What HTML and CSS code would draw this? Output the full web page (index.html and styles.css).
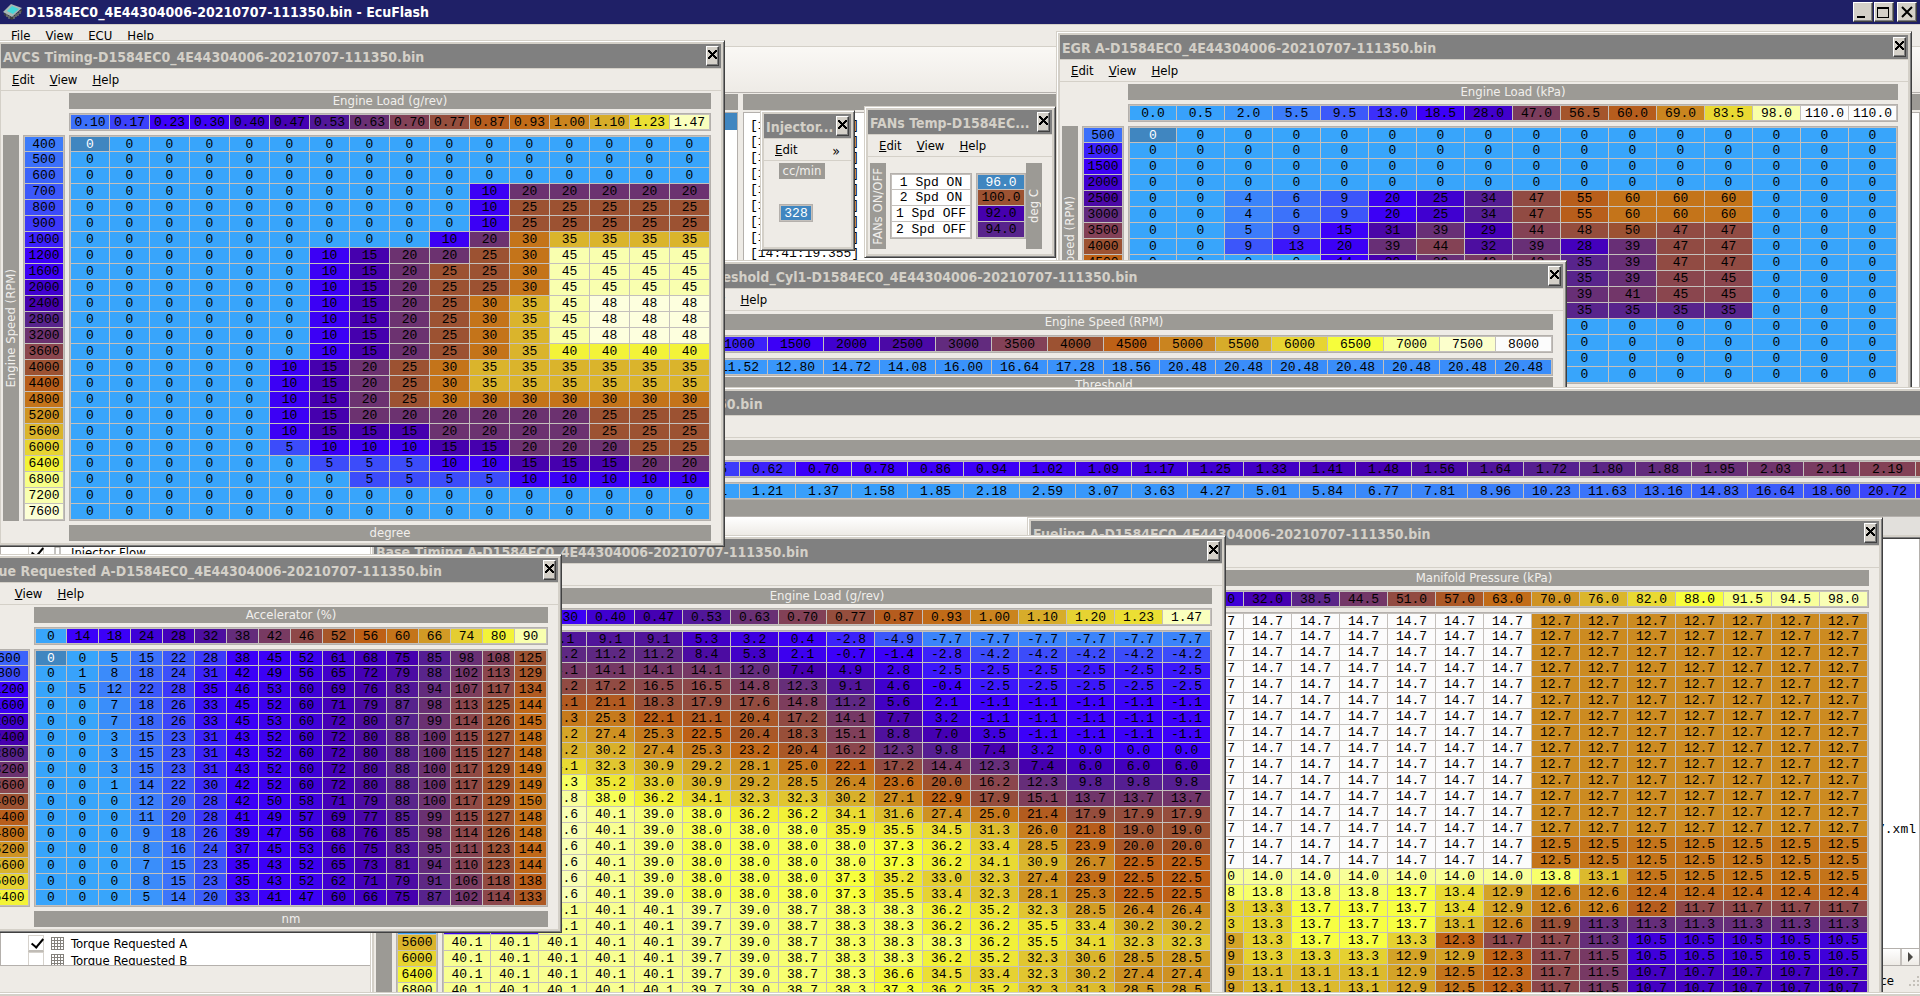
FILE: index.html
```html
<!DOCTYPE html>
<html lang="en">
<head>
<meta charset="utf-8">
<title>D1584EC0_4E44304006-20210707-111350.bin - EcuFlash</title>
<link rel="stylesheet" href="styles.css">
</head>
<body>
<div class="app">
  <header class="app-title">
    <svg class="app-icon" viewBox="0 0 20 16" width="20" height="16" aria-hidden="true">
      <path d="M1 9v2l8 5v-3zM9 13v3l10-8V5z" fill="#3c3f3d"/>
      <path d="M0 8L8 0l11 4-10 9z" fill="#a9b8b4"/>
      <path d="M4 7l5-5 7 3-6 5z" fill="#45d6d8"/>
      <path d="M11 12v3M13 10v3M15 9v3M17 7v3M4 10v3M6 12v3" stroke="#8a8f8a" stroke-width="1"/>
    </svg>
    <h1>D1584EC0_4E44304006-20210707-111350.bin - EcuFlash</h1>
    <div class="app-buttons">
      <button class="frame-button" aria-label="Minimize"><svg width="16" height="16" viewBox="0 0 16 16"><path d="M2 12h8v2H2z"/></svg></button>
      <button class="frame-button" aria-label="Maximize"><svg width="16" height="16" viewBox="0 0 16 16"><path d="M1 3h12v11H1zM2 5v8h10V5z" fill-rule="evenodd"/></svg></button>
      <button class="frame-button is-close" aria-label="Close"><svg width="16" height="16" viewBox="0 0 16 16"><path d="M3 3l10 10M13 3L3 13" stroke="#000" stroke-width="2"/></svg></button>
    </div>
  </header>
  <nav class="app-menu">
    <a href="#">File</a><a href="#">View</a><a href="#">ECU</a><a href="#">Help</a>
  </nav>
  <div class="toolbar"></div>

  <main class="docks">
    <section class="dock dock-tree">
      <div class="dock-bar"></div>
      <ul class="tree">
        <li class="tree-root"></li>
        <li class="tree-row row-injector"><label><input type="checkbox" checked><svg class="leaf" width="13" height="13" viewBox="0 0 13 13"><path d="M4 1h5v11H4z" fill="#fff" stroke="#8a8782"/></svg>Injector Flow</label></li>
        <li class="tree-row row-torque"><label><input type="checkbox" checked><svg class="leaf" width="13" height="13" viewBox="0 0 13 13"><path d="M.5 0v13M3.500 0v13M6.500 0v13M9.500 0v13M12.500 0v13M0 .5h13M0 3.500h13M0 6.500h13M0 9.500h13M0 12.500h13" stroke="#84817c"/></svg>Torque Requested A</label></li>
        <li class="tree-row"><label><input type="checkbox"><svg class="leaf" width="13" height="13" viewBox="0 0 13 13"><path d="M.5 0v13M3.500 0v13M6.500 0v13M9.500 0v13M12.500 0v13M0 .5h13M0 3.500h13M0 6.500h13M0 9.500h13M0 12.500h13" stroke="#84817c"/></svg>Torque Requested B</label></li>
      </ul>
    </section>
    <section class="dock dock-log">
      <div class="dock-bar"></div>
      <ol class="log">
        <li>[14:41:19.355] EcuFlash Version 1.44 a</li>
        <li>[14:41:19.355] OpenPort Library 1.4 99</li>
        <li>[14:41:19.355]</li>
        <li>[14:41:19.355]</li>
        <li>[14:41:19.355]</li>
        <li>[14:41:19.355]</li>
        <li>[14:41:19.355]</li>
        <li>[14:41:19.355]</li>
        <li>[14:41:19.355]</li>
        <li class="log-path">7.xml</li>
      </ol>
      <div class="scrollbar"><button class="scroll-right" aria-label="Scroll right"><svg width="6" height="10" viewBox="0 0 6 10"><path d="M0 0l5 5-5 5z" fill="#4b4946"/></svg></button></div>
    </section>
  </main>
  <footer class="status">
    <span>No Vehicle Interface</span>
    <svg class="grip" width="12" height="12" viewBox="0 0 12 12"><path d="M9 1h2v2H9zM5 5h2v2H5zM9 5h2v2H9zM1 9h2v2H1zM5 9h2v2H5zM9 9h2v2H9z" fill="#c5c1ba"/></svg>
  </footer>
  <div class="app-frame"></div>

  <div class="windows" id="windows">
    <section class="win win-injector">
      <div class="win-title"><h2>Injector...</h2><button class="close" aria-label="Close"></button></div>
      <nav class="win-menu"><a href="#"><u>E</u>dit</a><button class="more" aria-label="More">»</button></nav>
      <div class="injector-body">
        <div class="axis-label">cc/min</div>
        <table class="grid"><tbody><tr><td class="selected">328</td></tr></tbody></table>
      </div>
    </section>
    <section class="win win-fans">
      <div class="win-title"><h2>FANs Temp-D1584EC...</h2><button class="close" aria-label="Close"></button></div>
      <nav class="win-menu"><a href="#"><u>E</u>dit</a><a href="#"><u>V</u>iew</a><a href="#"><u>H</u>elp</a></nav>
      <div class="fans-body">
        <div class="axis-label is-vertical"><span>FANs ON/OFF</span></div>
        <table class="grid fans-names"><tbody><tr><th>1 Spd ON</th></tr><tr><th>2 Spd ON</th></tr><tr><th>1 Spd OFF</th></tr><tr><th>2 Spd OFF</th></tr></tbody></table>
        <table class="grid fans-values" id="fan-values"><tbody></tbody></table>
        <div class="axis-label is-vertical"><span>deg C</span></div>
      </div>
    </section>
  </div>
</div>
<script src="tables.js"></script>
</body>
</html>
```
FILE: styles.css
```css
:root {
  --face: #d4d0c8;
  --panel: #eeebe6;
  --bar: #9c9a95;
  --line: #c4c0bc;
  --edge: #b4b0ac;
  --ui: "DejaVu Sans Condensed", "DejaVu Sans", sans-serif;
  --mono: "Liberation Mono", "Courier New", monospace;
}

* { box-sizing: border-box; }

body {
  margin: 0;
  background: var(--panel);
  color: #000;
  font: 13px/16px var(--ui);
}

a { color: inherit; text-decoration: none; }
h1, h2 { margin: 0; font-size: 14px; font-weight: bold; white-space: nowrap; }
ul, ol { margin: 0; padding: 0; list-style: none; }

.app {
  position: relative;
  display: flex;
  flex-direction: column;
  height: 100vh;
  overflow: hidden;
}

/* application frame */
.app-title {
  display: flex;
  align-items: center;
  height: 24px;
  padding: 0 3px;
  background: #1f2067;
  color: #fff;
}
.app-icon { margin-right: 3px; }
.app-buttons { display: flex; margin-left: auto; gap: 1px; }
.frame-button, .close {
  display: grid;
  place-items: center;
  padding: 0;
  border: 1px solid;
  border-color: #fff #404040 #404040 #fff;
  background: var(--face);
  box-shadow: inset -1px -1px #808080;
}
.frame-button { width: 20px; height: 20px; }
.is-close { margin-left: 2px; }

.app-menu {
  display: flex;
  gap: 15px;
  height: 23px;
  padding: 3px 11px 0;
  border-top: 1px solid var(--face);
  border-bottom: 1px solid var(--face);
}
.toolbar {
  height: 46px;
  border-bottom: 1px solid var(--edge);
  background: linear-gradient(#faf8f5, var(--panel));
}

.docks {
  display: flex;
  flex: 1;
  gap: 5px;
  min-height: 0;
  padding-top: 1px;
}
.dock { display: flex; flex-direction: column; min-height: 0; }
.dock-tree { width: 738px; }
.dock-log { flex: 1; }
.dock-bar { height: 16px; margin-bottom: 2px; background: var(--bar); }

.tree {
  flex: 1;
  overflow: hidden;
  border: 1px solid var(--edge);
  background: #fff;
}
.tree-root { height: 17px; background: #4086c0; }
.tree-row { height: 17px; padding-left: 27px; }
.tree-row label { display: flex; align-items: center; height: 17px; }
.tree-row input {
  appearance: none;
  width: 16px;
  height: 17px;
  margin: 0 7px 0 0;
  border: 1px solid #d6d2cc;
  border-bottom: 2px solid #c0bcb6;
  background: #fff;
}
.tree-row input:checked::before {
  content: "";
  display: block;
  width: 5px;
  height: 10px;
  margin: 0 0 0 5px;
  border: solid #000;
  border-width: 0 2px 2px 0;
  transform: rotate(40deg);
}
.leaf { margin-right: 7px; }
.row-injector { margin-top: calc(24 * 17px + 6px); }
.row-torque { margin-top: calc(22 * 17px); }

.log {
  flex: 1;
  overflow: hidden;
  padding: 5px 3px 0 6px;
  border: 1px solid var(--edge);
  border-bottom: 0;
  background: #fff;
  font: 13px/16px var(--mono);
}
.log-path { margin-top: calc(35 * 16px); text-align: right; }
.scrollbar {
  display: flex;
  justify-content: flex-end;
  height: 18px;
  border: 1px solid var(--edge);
  background: linear-gradient(#fff, var(--panel));
}
.scroll-right {
  width: 19px;
  padding: 0;
  border: 0;
  border-left: 2px solid var(--line);
  background: none;
}

.status {
  display: flex;
  align-items: center;
  justify-content: flex-end;
  gap: 14px;
  height: 26px;
  padding-top: 4px;
}
.app-frame {
  position: relative;
  z-index: 2;
  height: 4px;
  border-top: 1px solid var(--face);
  background: var(--face);
  box-shadow: inset 0 1px #fff;
}

/* floating windows */
.windows { position: absolute; inset: 0; overflow: hidden; }
.win {
  position: absolute;
  width: max-content;
  padding: 3px;
  border: 1px solid;
  border-color: var(--face) #404040 #404040 var(--face);
  background: var(--face);
  box-shadow: inset 1px 1px #fff, inset -1px -1px #808080;
}
.win-title {
  display: flex;
  align-items: center;
  justify-content: space-between;
  height: 24px;
  padding: 0 2px;
  background: #808080;
  color: var(--face);
}
.win-title h2 { padding-top: 2px; }
.close { flex: none; width: 13px; height: 20px; }
.close::before {
  content: "";
  width: 9px;
  height: 9px;
  margin-bottom: 3px;
  background:
    linear-gradient(45deg, transparent 42%, #000 42% 58%, transparent 58%),
    linear-gradient(-45deg, transparent 42%, #000 42% 58%, transparent 58%);
}
.win-menu {
  display: flex;
  gap: 15px;
  height: 23px;
  padding: 3px 11px 0;
  border-top: 1px solid var(--face);
  border-bottom: 1px solid var(--face);
  background: var(--panel);
}
.more { margin-left: auto; padding: 0; border: 0; background: none; font: 14px/16px var(--ui); }

.map {
  display: grid;
  grid-template-columns: 16px 42px var(--values);
  gap: 4px;
  padding: 2px 10px 2px 2px;
  background: var(--panel);
}
.map .x-label, .map .x-axis, .map .unit { grid-column: 3; }
.axis-label {
  height: 16px;
  background: var(--bar);
  color: #f1efec;
  font-size: 13px;
  line-height: 16px;
  text-align: center;
  white-space: nowrap;
}
.is-vertical {
  display: flex;
  align-items: center;
  justify-content: center;
  width: 16px;
  height: auto;
}
.is-vertical span { writing-mode: vertical-rl; transform: rotate(180deg); }

.grid {
  width: 100%;
  border: 1px solid var(--edge);
  border-spacing: 0;
  table-layout: fixed;
  background: var(--line);
  font: 13px/13px var(--mono);
}
.grid td, .grid th {
  height: 16px;
  padding: 0;
  border: 0 solid var(--line);
  border-width: 0 1px 1px 0;
  font-weight: normal;
  text-align: center;
  white-space: nowrap;
}
.grid tr:first-child > * { border-top-width: 1px; }
.grid tr > :first-child { border-left-width: 1px; }
.grid .selected { background: #4086c0; color: #fff; }

/* one-row maps have no row axis */
.map.is-single { grid-template-columns: var(--values); padding-left: 6px; }
.is-single .x-label, .is-single .x-axis, .is-single .unit { grid-column: 1; }
.is-single .unit { margin-top: -4px; }

/* width of the value grid for each cell size */
.cells-32 { --values: 514px; }
.cells-40 { --values: 642px; }
.cells-48 { --values: 770px; }
.cells-56 { --values: 898px; }
.win-maf { --values: 1682px; }

.win-egr { left: 1056px; top: 31px; }
.win-injector { left: 760px; top: 110px; width: 95px; }
.win-fans { left: 864px; top: 106px; }
.win-threshold { left: 645px; top: 260px; }
.win-threshold .map { row-gap: 5px; padding-top: 3px; }
.win-maf { left: 285px; top: 387px; }
.win-maf .map { padding-bottom: 0; padding-left: 2px; }
.win-fueling { left: 1027px; top: 517px; }
.win-base { left: 370px; top: 535px; }
.win-avcs { left: -3px; top: 40px; }
.win-torque { left: -38px; top: 554px; }

.window-scroll { height: 19px; border-top: 1px solid var(--edge); background: #e2e0dc; }
.window-thumb {
  width: 1000px;
  height: 18px;
  background: linear-gradient(#fff, var(--panel));
}

.injector-body {
  display: flex;
  flex-direction: column;
  align-items: flex-start;
  gap: 25px;
  padding: 2px 15px 25px;
  background: var(--panel);
}
.injector-body .axis-label { width: 46px; }
.injector-body .grid { width: 34px; }

.fans-body {
  display: grid;
  grid-template-columns: 16px 82px 50px 16px;
  align-items: center;
  column-gap: 4px;
  padding: 6px 6px 5px 2px;
  background: var(--panel);
}
.fans-body .is-vertical { height: 86px; }
.fans-body .is-vertical:last-child { margin-left: -4px; }
.fans-names th { background: #fff; }
```
FILE: tables.js
```js
// Colour ramp shared by every map: [fraction, r, g, b]
const RAMP = [
  [0, 56, 165, 251], [0.05, 60, 124, 250], [0.1, 60, 76, 250], [0.12, 60, 44, 250],
  [0.14, 60, 0, 250], [0.2, 60, 0, 245], [0.25, 64, 0, 208], [0.3, 70, 0, 174],
  [0.35, 88, 36, 140], [0.4, 108, 50, 112], [0.45, 138, 70, 78], [0.5, 156, 82, 50],
  [0.56, 190, 96, 22], [0.6, 196, 116, 26], [0.7, 218, 180, 44], [0.8, 243, 243, 56],
  [0.815, 247, 255, 60], [0.85, 247, 255, 135], [0.9, 249, 255, 175], [0.96, 253, 255, 222], [1, 252, 252, 252]
];

function colour(value, [min, max]) {
  const f = Math.min(1, Math.max(0, (value - min) / (max - min)));
  const i = Math.max(1, RAMP.findIndex(stop => stop[0] >= f));
  const a = RAMP[i - 1], b = RAMP[i];
  const t = (f - a[0]) / (b[0] - a[0]);
  return "rgb(" + [1, 2, 3].map(k => Math.round(a[k] + (b[k] - a[k]) * t)).join(",") + ")";
}

// "12.7*3" stands for three equal cells, "_" for an empty one
function expand(line) {
  return line.trim().split(/\s+/).flatMap(token => {
    const [value, count] = token.split("*");
    return Array(Number(count || 1)).fill(value === "_" ? "" : value);
  });
}

function grid(rows, range, cls, tag, select) {
  const body = rows.map((row, y) => "<tr>" + row.map((v, x) =>
    select && x === 0 && y === 0
      ? `<${tag} class="selected">${v}</${tag}>`
      : `<${tag} style="background:${colour(Number(v), range)}">${v}</${tag}>`
  ).join("") + "</tr>").join("");
  return `<table class="grid ${cls}"><tbody>${body}</tbody></table>`;
}

function addWindow(m) {
  const rows = m.rows.map(expand);
  const single = !m.y;
  const side = single ? "" :
    `<div class="axis-label is-vertical"><span>${m.yLabel}</span></div>` +
    grid(expand(m.y).map(v => [v]), [0, 8000], "y-axis", "th");
  const win = document.createElement("section");
  win.className = `win cells-${m.cell} win-${m.id}`;
  win.innerHTML =
    `<div class="win-title"><h2>${m.title}-D1584EC0_4E44304006-20210707-111350.bin</h2><button class="close" aria-label="Close"></button></div>` +
    `<nav class="win-menu"><a href="#"><u>E</u>dit</a><a href="#"><u>V</u>iew</a><a href="#"><u>H</u>elp</a></nav>` +
    `<div class="map${single ? " is-single" : ""}">` +
    `<div class="axis-label x-label">${m.xLabel}</div>` +
    grid([expand(m.x)], m.xRange, "x-axis", "th") + side +
    grid(rows, m.range, "values", "td", m.select) +
    `<div class="axis-label unit">${m.unit}</div></div>` +
    (m.scroll ? `<div class="window-scroll"><div class="window-thumb"></div></div>` : "");
  document.getElementById("windows").append(win);
}

addWindow({
  id: "egr", cell: 48, title: "EGR A", xLabel: "Engine Load (kPa)", yLabel: "Engine Speed (RPM)", unit: "", select: true,
  x: "0.0 0.5 2.0 5.5 9.5 13.0 18.5 28.0 47.0 56.5 60.0 69.0 83.5 98.0 110.0 110.0", xRange: [0, 110], range: [0, 100],
  y: "500 1000 1500 2000 2500 3000 3500 4000 4500 5000 5500 6000 6500 7000 7500 8000",
  rows: [
    "0*16", "0*16", "0*16", "0*16",
    "0 0 4 6 9 20 25 34 47 55 60 60 60 0*3",
    "0 0 4 6 9 20 25 34 47 55 60 60 60 0*3",
    "0 0 5 9 15 31 39 29 44 48 50 47 47 0*3",
    "0 0 9 13 20 39 44 32 39 28 39 47 47 0*3",
    "0 0 0 0 14 30 39 42 42 35 39 47 47 0*3",
    "0*9 35 39 45 45 0*3", "0*9 39 41 45 45 0*3", "0*9 35*4 0*3",
    "0*16", "0*16", "0*16", "0*16"
  ]
});

addWindow({
  id: "threshold", cell: 56, title: "Knock Threshold_Cyl1", xLabel: "Engine Speed (RPM)", unit: "Threshold",
  x: "500 1000 1500 2000 2500 3000 3500 4000 4500 5000 5500 6000 6500 7000 7500 8000", xRange: [0, 8000], range: [0, 700],
  rows: ["11.52 11.52 12.80 14.72 14.08 16.00 16.64 17.28 18.56 20.48*7"]
});

addWindow({
  id: "maf", cell: 56, title: "MAF Sensor Scaling", xLabel: "", unit: "", scroll: true,
  x: "_*7 0.55 0.62 0.70 0.78 0.86 0.94 1.02 1.09 1.17 1.25 1.33 1.41 1.48 1.56 1.64 1.72 1.80 1.88 1.95 2.03 2.11 2.19 2.27", xRange: [0, 5], range: [0, 200],
  rows: ["_*7 1.11 1.21 1.37 1.58 1.85 2.18 2.59 3.07 3.63 4.27 5.01 5.84 6.77 7.81 8.96 10.23 11.63 13.16 14.83 16.64 18.60 20.72 22.97"]
});

addWindow({
  id: "fueling", cell: 48, title: "Fueling A", xLabel: "Manifold Pressure (kPa)", yLabel: "Engine Speed (RPM)", unit: "",
  x: "_ _ 26.0 32.0 38.5 44.5 51.0 57.0 63.0 70.0 76.0 82.0 88.0 91.5 94.5 98.0", xRange: [0, 108], range: [9.2, 14.7],
  y: "_*24",
  rows: [
    ...Array(14).fill("_ _ 14.7*7 12.7*7"),
    "_ _ 14.7*7 12.5*7", "_ _ 14.7*7 12.5*7",
    "_ _ 14.0*7 13.8 13.1 12.5*5",
    "_ _ 13.8*4 13.7 13.4 12.9 12.6 12.6 12.4*5",
    "_ _ 13.3 13.3 13.7*3 13.4 12.9 12.6 12.6 12.2 11.7*4",
    "_ _ 13.3 13.3 13.7*3 13.1 12.6 11.9 11.3*6",
    "_ _ 12.9 13.3 13.7 13.7 13.3 12.3 11.7 11.7 11.3 10.5*5",
    "_ _ 12.9 13.3*3 12.9 12.9 12.3 11.7 11.5 10.5*5",
    "_ _ 12.9 13.1*3 12.9 12.5 12.3 11.7 11.5 10.7*5",
    "_ _ 12.9 13.1*3 12.9 12.5 12.3 11.7 11.5 10.7*5"
  ]
});

addWindow({
  id: "base", cell: 48, title: "Base Timing A", xLabel: "Engine Load (g/rev)", yLabel: "", unit: "",
  x: "_ _ 0.30 0.40 0.47 0.53 0.63 0.70 0.77 0.87 0.93 1.00 1.10 1.20 1.23 1.47", xRange: [0, 1.6], range: [-10, 48],
  y: "_*19 5600 6000 6400 6800",
  rows: [
    "_ _ 9.1 9.1 9.1 5.3 3.2 0.4 -2.8 -4.9 -7.7*5 -7.7",
    "_ _ 11.2 11.2 11.2 8.4 5.3 2.1 -0.7 -1.4 -2.8 -4.2*5",
    "_ _ 14.1 14.1 14.1 14.1 12.0 7.4 4.9 2.8 -2.5*6",
    "_ _ 17.2 17.2 16.5 16.5 14.8 12.3 9.1 4.6 -0.4 -2.5*5",
    "_ _ 21.1 21.1 18.3 17.9 17.6 14.8 11.2 5.6 2.1 -1.1*5",
    "_ _ 25.3 25.3 22.1 21.1 20.4 17.2 14.1 7.7 3.2 -1.1*5",
    "_ _ 29.2 27.4 25.3 22.5 20.4 18.3 15.1 8.8 7.0 3.5 -1.1*4",
    "_ _ 30.2 30.2 27.4 25.3 23.2 20.4 16.2 12.3 9.8 7.4 3.2 0.0*3",
    "_ _ 34.1 32.3 30.9 29.2 28.1 25.0 22.1 17.2 14.4 12.3 7.4 6.0*3",
    "_ _ 38.3 35.2 33.0 30.9 29.2 28.5 26.4 23.6 20.0 16.2 12.3 9.8*3",
    "_ _ 40.8 38.0 36.2 34.1 32.3 32.3 30.2 27.1 22.9 17.9 15.1 13.7*3",
    "_ _ 42.6 40.1 39.0 38.0 36.2 36.2 34.1 31.6 27.4 25.0 21.4 17.9*3",
    "_ _ 42.6 40.1 39.0 38.0*3 35.9 35.5 34.5 31.3 26.0 21.8 19.0 19.0",
    "_ _ 42.6 40.1 39.0 38.0*4 37.3 36.2 33.4 28.5 23.9 20.0 20.0",
    "_ _ 42.6 40.1 39.0 38.0*4 37.3 36.2 34.1 30.9 26.7 22.5 22.5",
    "_ _ 42.6 40.1 39.0 38.0*3 37.3 35.2 33.0 32.3 27.4 23.9 22.5 22.5",
    "_ _ 42.6 40.1 39.0 38.0*3 37.3 35.5 33.4 32.3 28.1 25.3 22.5 22.5",
    "_ _ 40.1*3 39.7 39.0 38.7 38.3 38.3 36.2 35.2 32.3 28.5 26.4 26.4",
    "_ _ 40.1*3 39.7 39.0 38.7 38.3 38.3 36.2 36.2 35.5 33.4 30.2 30.2",
    "40.1*5 39.7 39.0 38.7 38.3 38.3 38.3 36.2 35.5 34.1 32.3 32.3",
    "40.1*5 39.7 39.0 38.7 38.3 38.3 36.2 35.2 32.3 30.6 28.5 28.5",
    "40.1*5 39.7 39.0 38.7 38.3 36.6 34.5 33.4 32.3 30.2 27.4 27.4",
    "40.1*5 39.7 39.0 38.7 38.3 37.3 36.2 35.2 32.3 31.3 28.5 28.5"
  ]
});

addWindow({
  id: "avcs", cell: 40, title: "AVCS Timing", xLabel: "Engine Load (g/rev)", yLabel: "Engine Speed (RPM)", unit: "degree", select: true,
  x: "0.10 0.17 0.23 0.30 0.40 0.47 0.53 0.63 0.70 0.77 0.87 0.93 1.00 1.10 1.23 1.47", xRange: [0, 1.6], range: [0, 50],
  y: "400 500 600 700 800 900 1000 1200 1600 2000 2400 2800 3200 3600 4000 4400 4800 5200 5600 6000 6400 6800 7200 7600",
  rows: [
    "0*16", "0*16", "0*16",
    "0*10 10 20*5", "0*10 10 25*5", "0*10 10 25*5",
    "0*9 10 20 30 35*4",
    "0*6 10 15 20 20 25 30 45*4",
    "0*6 10 15 20 25 25 30 45*4",
    "0*6 10 15 20 25 25 30 45*4",
    "0*6 10 15 20 25 30 35 45 48*3",
    "0*6 10 15 20 25 30 35 45 48*3",
    "0*6 10 15 20 25 30 35 45 48*3",
    "0*6 10 15 20 25 30 35 40*4",
    "0*5 10 15 20 25 30 35*6",
    "0*5 10 15 20 25 30 35*6",
    "0*5 10 15 20 25 30*7",
    "0*5 10 15 20*6 25*3",
    "0*5 10 15*3 20*4 25*3",
    "0*5 5 10*3 15*2 20*3 25*2",
    "0*6 5*3 10*2 15*3 20*2",
    "0*7 5*4 10*5",
    "0*16", "0*16"
  ]
});

addWindow({
  id: "torque", cell: 32, title: "Torque Requested A", xLabel: "Accelerator (%)", yLabel: "Engine Speed (RPM)", unit: "nm", select: true,
  x: "0 14 18 24 28 32 38 42 46 52 56 60 66 74 80 90", xRange: [0, 100], range: [0, 250],
  y: "600 800 1200 1600 2000 2400 2800 3200 3600 4000 4400 4800 5200 5600 6000 6400",
  rows: [
    "0 0 5 15 22 28 38 45 52 61 68 75 85 98 108 125",
    "0 1 8 18 24 31 42 49 56 65 72 79 88 102 113 129",
    "0 5 12 22 28 35 46 53 60 69 76 83 94 107 117 134",
    "0 0 7 18 26 33 45 52 60 71 79 87 98 113 125 144",
    "0 0 7 18 26 33 45 53 60 72 80 87 99 114 126 145",
    "0 0 3 15 23 31 43 52 60 72 80 88 100 115 127 148",
    "0 0 3 15 23 31 43 52 60 72 80 88 100 115 127 148",
    "0 0 3 15 23 31 43 52 60 72 80 88 100 117 129 149",
    "0 0 1 14 22 30 42 52 60 72 80 88 100 117 129 149",
    "0 0 0 12 20 28 42 50 58 71 79 88 100 117 129 150",
    "0 0 0 11 20 28 41 49 57 69 77 85 99 115 127 148",
    "0 0 0 9 18 26 39 47 56 68 76 85 98 114 126 148",
    "0 0 0 8 16 24 37 45 53 66 75 83 95 111 123 144",
    "0 0 0 7 15 23 35 43 52 65 73 81 94 110 123 144",
    "0 0 0 8 15 23 35 43 52 62 71 79 91 106 118 138",
    "0 0 0 5 14 20 33 41 47 60 66 75 87 102 114 133"
  ]
});

document.querySelector("#fan-values tbody").innerHTML = ["96.0", "100.0", "92.0", "94.0"].map((v, i) =>
  i === 0 ? `<tr><td class="selected">${v}</td></tr>` : `<tr><td style="background:${colour(Number(v), [80, 120])}">${v}</td></tr>`
).join("");
```
